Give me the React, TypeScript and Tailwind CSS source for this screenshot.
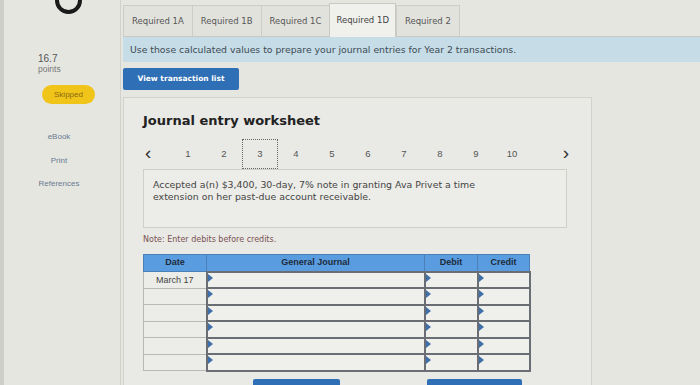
import React from 'react'

const tabs = ['Required 1A', 'Required 1B', 'Required 1C', 'Required 1D', 'Required 2']
const pages = ['1', '2', '3', '4', '5', '6', '7', '8', '9', '10']

const Flag = () => (
  <span className="absolute left-0 top-0 w-0 h-0 border-t-[4px] border-t-transparent border-b-[4px] border-b-transparent border-l-[5px] border-l-[#3f6fa8] mt-[1px]"></span>
)

const App = () => {
  const rows = ['March 17', '', '', '', '', '']

  return (
    <div className="w-[700px] h-[385px] overflow-hidden bg-[#e6e6e1] flex font-['DejaVu_Sans',sans-serif]">
      {/* Sidebar */}
      <div className="w-[121px] shrink-0 border-r border-[#d2d2cd] border-l-[4px] border-l-[#cfcfca] flex flex-col">
        <div className="ml-[51px] -mt-[13px] w-[27px] h-[27px] rounded-full border-[4px] border-[#1a1a1a]"></div>
        <div className="ml-[34px] mt-[39px] font-['Liberation_Sans',sans-serif] text-[10px] leading-[11px] text-[#555]">16.7</div>
        <div className="ml-[34px] font-['Liberation_Sans',sans-serif] text-[8.5px] leading-[11px] text-[#777]">points</div>
        <div className="ml-[38px] mt-[10px] w-[53px] h-[19px] rounded-full bg-[#f0c419] flex items-center justify-center font-['Liberation_Sans',sans-serif] text-[8px] text-[#8a6a10]">
          Skipped
        </div>
        <div className="flex flex-col items-center font-['Liberation_Sans',sans-serif] text-[8px] text-[#6a7a90] mt-[27px] gap-[12px] pr-[6px]">
          <span>eBook</span>
          <span>Print</span>
          <span className="-mt-[1px]">References</span>
        </div>
      </div>

      {/* Main */}
      <div className="flex-1 flex flex-col pl-[2px]">
        {/* Tabs */}
        <div className="shrink-0 flex items-end mt-[3px] h-[34px] border-b border-[#c9c9c4]">
          {tabs.map((t, i) => (
            <div
              key={t}
              className={
                i === 3
                  ? 'h-[34px] px-[6px] flex items-center bg-[#f0f0ec] border border-b-0 border-[#c9c9c4] text-[8.5px] text-[#444] -mb-px'
                  : 'h-[31px] px-[8px] flex items-center bg-[#e2e2dd] border border-[#cdcdc8] border-b-0 text-[8.5px] text-[#555] mr-[-1px]'
              }
            >
              {t}
            </div>
          ))}
        </div>

        {/* Info bar */}
        <div className="shrink-0 h-[25px] bg-[#c6dce6] flex items-center pl-[7px] text-[9.3px] text-[#3c4a55]">
          Use those calculated values to prepare your journal entries for Year 2 transactions.
        </div>

        {/* Button */}
        <div className="shrink-0 mt-[6px]">
          <div className="w-[116px] h-[22px] rounded-[2px] bg-[#2f6fb5] flex items-center justify-center text-white font-bold text-[7.5px]">
            View transaction list
          </div>
        </div>

        {/* Worksheet panel */}
        <div className="shrink-0 mt-[7px] w-[469px] h-[320px] border border-[#d3d3ce] bg-[#e9e9e5] pl-[19px] pr-[24px]">
          <div className="mt-[14px] font-bold text-[13px] text-[#222] leading-[18px]">Journal entry worksheet</div>

          {/* Pagination */}
          <div className="mt-[9px] flex items-center h-[30px] font-['Liberation_Sans',sans-serif] text-[9.5px] text-[#555]">
            <span className="w-[27px] pl-[2px] text-[19px] text-[#333] leading-none -mt-[3px]">‹</span>
            {pages.map((p) => (
              <div
                key={p}
                className={
                  p === '3'
                    ? 'w-[36px] h-[30px] flex items-center justify-center border border-dotted border-[#666]'
                    : 'w-[36px] h-[30px] flex items-center justify-center'
                }
              >
                {p}
              </div>
            ))}
            <span className="ml-auto mr-[-2px] text-[19px] text-[#333] leading-none -mt-[3px]">›</span>
          </div>

          {/* Description */}
          <div className="h-[59px] border border-[#cfcfca] bg-[#ececE8] pl-[9px] pt-[9px] text-[9.4px] leading-[12px] text-[#444]">
            Accepted a(n) $3,400, 30-day, 7% note in granting Ava Privet a time
            <br />
            extension on her past-due account receivable.
          </div>

          <div className="mt-[6px] text-[8px] text-[#7a5252]">Note: Enter debits before credits.</div>

          {/* Table */}
          <table className="mt-[8px] border-collapse font-['Liberation_Sans',sans-serif] text-[9px]">
            <thead>
              <tr className="h-[17px] bg-[#5a9ce0] text-[#1d2b3a] font-bold">
                <th className="w-[63px] border border-[#4a7fb8] font-bold">Date</th>
                <th className="w-[218px] border border-[#4a7fb8] font-bold">General Journal</th>
                <th className="w-[53px] border border-[#4a7fb8] font-bold">Debit</th>
                <th className="w-[52px] border border-[#4a7fb8] font-bold">Credit</th>
              </tr>
            </thead>
            <tbody>
              {rows.map((d, i) => (
                <tr key={i} className="h-[16.5px]">
                  <td className="border border-[#b8b8b4] bg-[#ececE8] text-center text-[#444] leading-[12px]">{d}</td>
                  <td className="relative border-2 border-[#6a6e74] bg-[#efefeb]"><Flag /></td>
                  <td className="relative border-2 border-[#6a6e74] bg-[#efefeb]"><Flag /></td>
                  <td className="relative border-2 border-[#6a6e74] bg-[#efefeb]"><Flag /></td>
                </tr>
              ))}
            </tbody>
          </table>

          {/* Bottom buttons (cut off) */}
          <div className="flex mt-[7px]">
            <div className="ml-[110px] w-[87px] h-[6px] bg-[#2f6fb5] rounded-t-[2px]"></div>
            <div className="ml-[87px] w-[95px] h-[6px] bg-[#2f6fb5] rounded-t-[2px]"></div>
          </div>
        </div>
      </div>
    </div>
  )
}

export default App
